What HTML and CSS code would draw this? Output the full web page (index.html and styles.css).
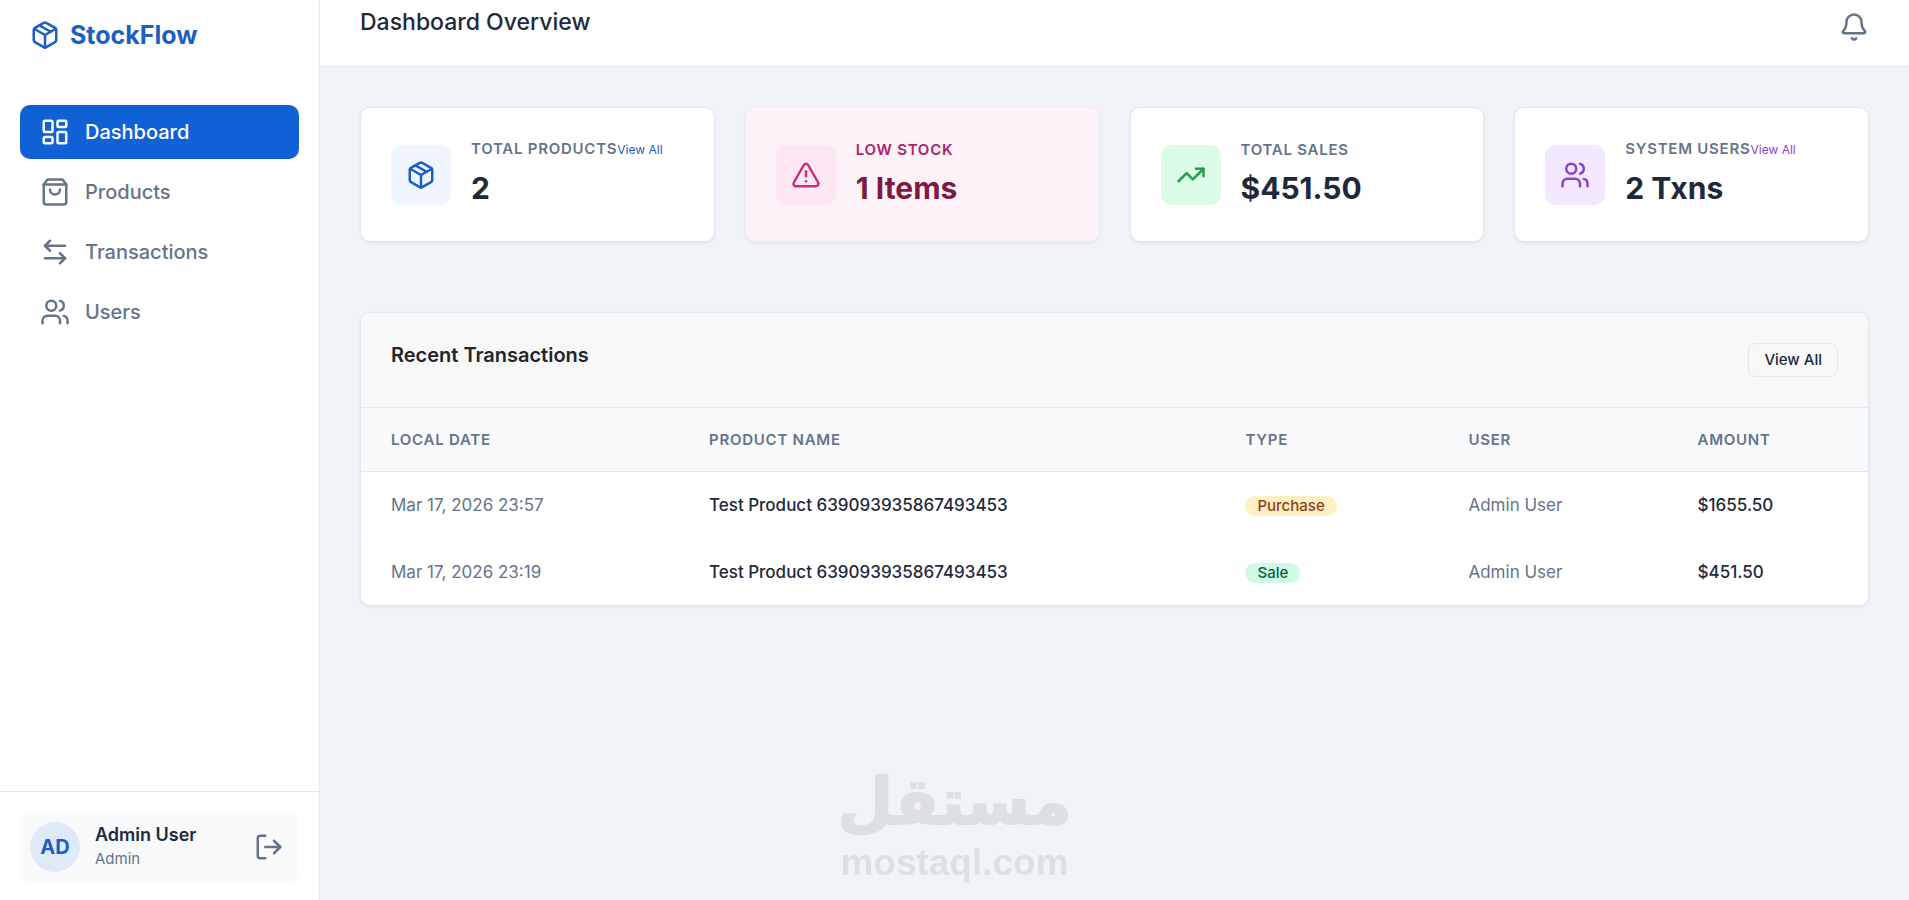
FILE: index.html
```html
<!DOCTYPE html>
<html lang="en">
<head>
    <meta charset="UTF-8">
    <meta name="viewport" content="width=device-width, initial-scale=1">
    <title>StockFlow</title>
    <link rel="stylesheet" href="styles.css">
</head>
<body>

<svg class="sprite" aria-hidden="true">
    <symbol id="icon-box" viewBox="0 0 24 24">
        <path d="M21 16V8a2 2 0 0 0-1-1.73l-7-4a2 2 0 0 0-2 0l-7 4A2 2 0 0 0 3 8v8a2 2 0 0 0 1 1.73l7 4a2 2 0 0 0 2 0l7-4A2 2 0 0 0 21 16z"/>
        <path d="M12 22V12"/>
        <path d="M3.3 7 12 12l8.7-5"/>
        <path d="m7.5 4.27 9 5.15"/>
    </symbol>
    <symbol id="icon-dashboard" viewBox="0 0 24 24">
        <rect x="3" y="3" width="7" height="9" rx="1"/>
        <rect x="14" y="3" width="7" height="5" rx="1"/>
        <rect x="14" y="12" width="7" height="9" rx="1"/>
        <rect x="3" y="16" width="7" height="5" rx="1"/>
    </symbol>
    <symbol id="icon-bag" viewBox="0 0 24 24">
        <path d="M6 2 3 6v14a2 2 0 0 0 2 2h14a2 2 0 0 0 2-2V6l-3-4Z"/>
        <path d="M3 6h18"/>
        <path d="M16 10a4 4 0 0 1-8 0"/>
    </symbol>
    <symbol id="icon-transfer" viewBox="0 0 24 24">
        <path d="M8 3 4 7l4 4"/>
        <path d="M4 7h16"/>
        <path d="m16 21 4-4-4-4"/>
        <path d="M20 17H4"/>
    </symbol>
    <symbol id="icon-users" viewBox="0 0 24 24">
        <path d="M16 21v-2a4 4 0 0 0-4-4H6a4 4 0 0 0-4 4v2"/>
        <circle cx="9" cy="7" r="4"/>
        <path d="M22 21v-2a4 4 0 0 0-3-3.87"/>
        <path d="M16 3.13a4 4 0 0 1 0 7.75"/>
    </symbol>
    <symbol id="icon-logout" viewBox="0 0 24 24">
        <path d="M9 21H5a2 2 0 0 1-2-2V5a2 2 0 0 1 2-2h4"/>
        <path d="m16 17 5-5-5-5"/>
        <path d="M21 12H9"/>
    </symbol>
    <symbol id="icon-bell" viewBox="0 0 24 24">
        <path d="M10.27 21a2 2 0 0 0 3.46 0"/>
        <path d="M3.26 15.33A1 1 0 0 0 4 17h16a1 1 0 0 0 .74-1.67C19.41 13.96 18 12.5 18 8A6 6 0 0 0 6 8c0 4.5-1.41 5.96-2.74 7.33"/>
    </symbol>
    <symbol id="icon-alert" viewBox="0 0 24 24">
        <path d="m21.73 18-8-14a2 2 0 0 0-3.48 0l-8 14A2 2 0 0 0 4 21h16a2 2 0 0 0 1.73-3"/>
        <path d="M12 9v4"/>
        <path d="M12 17h.01"/>
    </symbol>
    <symbol id="icon-trend" viewBox="0 0 24 24">
        <path d="m22 7-8.5 8.5-5-5L2 17"/>
        <path d="M16 7h6v6"/>
    </symbol>
</svg>

<div class="layout">
    <aside class="sidebar">
        <a class="brand" href="#">
            <svg class="icon"><use href="#icon-box"/></svg>
            <span>StockFlow</span>
        </a>

        <nav class="nav">
            <a class="nav-link active" href="#"><svg class="icon"><use href="#icon-dashboard"/></svg>Dashboard</a>
            <a class="nav-link" href="#"><svg class="icon"><use href="#icon-bag"/></svg>Products</a>
            <a class="nav-link" href="#"><svg class="icon"><use href="#icon-transfer"/></svg>Transactions</a>
            <a class="nav-link" href="#"><svg class="icon"><use href="#icon-users"/></svg>Users</a>
        </nav>

        <div class="sidebar-footer">
            <div class="profile">
                <div class="avatar">AD</div>
                <div class="profile-info">
                    <div class="profile-name">Admin User</div>
                    <div class="profile-role">Admin</div>
                </div>
                <button class="icon-button" type="button" aria-label="Log out">
                    <svg class="icon"><use href="#icon-logout"/></svg>
                </button>
            </div>
        </div>
    </aside>

    <div class="main">
        <header class="topbar">
            <h1>Dashboard Overview</h1>
            <button class="icon-button" type="button" aria-label="Notifications">
                <svg class="icon"><use href="#icon-bell"/></svg>
            </button>
        </header>

        <main class="content">
            <section class="stats">
                <div class="card stat">
                    <div class="stat-icon blue"><svg class="icon"><use href="#icon-box"/></svg></div>
                    <div>
                        <div class="stat-head"><span class="stat-label">Total Products</span><a class="stat-link" href="#">View All</a></div>
                        <div class="stat-value">2</div>
                    </div>
                </div>
                <div class="card stat stat-warning">
                    <div class="stat-icon pink"><svg class="icon"><use href="#icon-alert"/></svg></div>
                    <div>
                        <div class="stat-head"><span class="stat-label">Low Stock</span></div>
                        <div class="stat-value">1 Items</div>
                    </div>
                </div>
                <div class="card stat">
                    <div class="stat-icon green"><svg class="icon"><use href="#icon-trend"/></svg></div>
                    <div>
                        <div class="stat-head"><span class="stat-label">Total Sales</span></div>
                        <div class="stat-value">$451.50</div>
                    </div>
                </div>
                <div class="card stat">
                    <div class="stat-icon purple"><svg class="icon"><use href="#icon-users"/></svg></div>
                    <div>
                        <div class="stat-head"><span class="stat-label">System Users</span><a class="stat-link stat-link-purple" href="#">View All</a></div>
                        <div class="stat-value">2 Txns</div>
                    </div>
                </div>
            </section>

            <section class="card panel">
                <div class="panel-header">
                    <h2>Recent Transactions</h2>
                    <a class="btn" href="#">View All</a>
                </div>
                <table>
                    <thead>
                    <tr>
                        <th class="col-date">Local Date</th>
                        <th class="col-product">Product Name</th>
                        <th class="col-type">Type</th>
                        <th class="col-user">User</th>
                        <th>Amount</th>
                    </tr>
                    </thead>
                    <tbody>
                    <tr>
                        <td>Mar 17, 2026 23:57</td>
                        <td class="strong">Test Product 639093935867493453</td>
                        <td><span class="badge badge-purchase">Purchase</span></td>
                        <td>Admin User</td>
                        <td class="strong">$1655.50</td>
                    </tr>
                    <tr>
                        <td>Mar 17, 2026 23:19</td>
                        <td class="strong">Test Product 639093935867493453</td>
                        <td><span class="badge badge-sale">Sale</span></td>
                        <td>Admin User</td>
                        <td class="strong">$451.50</td>
                    </tr>
                    </tbody>
                </table>
            </section>
        </main>
    </div>
</div>

<div class="watermark">
    <div class="watermark-ar" lang="ar" dir="rtl">مستقل</div>
    <div class="watermark-en">mostaql.com</div>
</div>

</body>
</html>
```
FILE: styles.css
```css
* {
    box-sizing: border-box;
}

body {
    margin: 0;
    font-family: Inter, "Liberation Sans", sans-serif;
    font-size: 17px;
    color: #1e293b;
    background-color: #f0f4f9;
}

h1, h2 {
    margin: 0;
    font-weight: 600;
}

a {
    text-decoration: none;
}

.sprite {
    display: none;
}

.icon {
    display: block;
    width: 30px;
    height: 30px;
    flex-shrink: 0;
    fill: none;
    stroke: currentColor;
    stroke-width: 2;
    stroke-linecap: round;
    stroke-linejoin: round;
}

.icon-button {
    padding: 0;
    border: none;
    background: none;
    color: #64748b;
    cursor: pointer;
}

.layout {
    display: flex;
    min-height: 100vh;
}

/* Sidebar */

.sidebar {
    position: sticky;
    top: 0;
    display: flex;
    flex-direction: column;
    width: 320px;
    height: 100vh;
    flex-shrink: 0;
    background-color: #ffffff;
    border-right: 1px solid #e2e8f0;
}

.brand {
    display: flex;
    align-items: center;
    gap: 10px;
    padding: 20px 30px;
    font-size: 25px;
    line-height: 30px;
    font-weight: 700;
    color: #1b5fc1;
}

.nav {
    display: flex;
    flex-direction: column;
    gap: 6px;
    padding: 35px 20px;
    flex: 1;
}

.nav-link {
    display: flex;
    align-items: center;
    gap: 15px;
    height: 54px;
    padding: 0 20px;
    border-radius: 10px;
    font-size: 20px;
    font-weight: 500;
    color: #64748b;
}

.nav-link.active {
    background-color: #1161d6;
    color: #ffffff;
}

.sidebar-footer {
    padding: 20px 20px 18px;
    border-top: 1px solid #e2e8f0;
}

.profile {
    display: flex;
    align-items: center;
    gap: 15px;
    padding: 10px 15px 10px 10px;
    border-radius: 10px;
    background-color: #f8fafc;
}

.avatar {
    width: 50px;
    height: 50px;
    border-radius: 50%;
    background-color: #dfe9f8;
    color: #1b5fc1;
    font-size: 20px;
    line-height: 50px;
    font-weight: 700;
    text-align: center;
}

.profile-info {
    flex: 1;
    line-height: 24px;
}

.profile-name {
    font-size: 18px;
    font-weight: 600;
}

.profile-role {
    font-size: 15px;
    color: #64748b;
}

/* Top bar */

.topbar {
    display: flex;
    align-items: center;
    justify-content: space-between;
    padding: 8px 40px 20px;
    background-color: #ffffff;
    border-bottom: 1px solid #e2e8f0;
}

.topbar h1 {
    margin-bottom: 10px;
    font-size: 23px;
    line-height: 28px;
    font-weight: 500;
}

/* Content */

.main {
    flex: 1;
    min-width: 0;
}

.content {
    padding: 40px;
}

.card {
    background-color: #ffffff;
    border: 1px solid #e2e8f0;
    border-radius: 10px;
    box-shadow: 0 1px 3px rgba(0, 0, 0, 0.08);
}

.stats {
    display: grid;
    grid-template-columns: repeat(4, 1fr);
    gap: 30px;
    margin-bottom: 70px;
}

.stat {
    display: flex;
    align-items: center;
    gap: 20px;
    padding: 30px;
}

.stat-icon {
    display: flex;
    align-items: center;
    justify-content: center;
    width: 60px;
    height: 60px;
    border-radius: 10px;
}

.stat-icon.blue {
    background-color: #eff6ff;
    color: #1b5fc1;
}

.stat-icon.pink {
    background-color: #fce7f3;
    color: #c4307b;
}

.stat-icon.green {
    background-color: #dcfce7;
    color: #239f50;
}

.stat-icon.purple {
    background-color: #f3e8ff;
    color: #8b3fcb;
}

.stat-head {
    display: flex;
    align-items: baseline;
    margin-bottom: 5px;
    line-height: 22px;
}

.stat-label {
    font-size: 15px;
    font-weight: 600;
    letter-spacing: 0.05em;
    text-transform: uppercase;
    color: #64748b;
}

.stat-link {
    font-size: 12px;
    color: #1b5fc1;
}

.stat-link-purple {
    color: #8b3fcb;
}

.stat-value {
    font-size: 30px;
    line-height: 45px;
    font-weight: 700;
}

.stat-warning {
    background-color: #fdf2f8;
    border-color: #fce7f3;
}

.stat-warning .stat-label {
    color: #a8256a;
}

.stat-warning .stat-value {
    color: #7c1a44;
}

/* Transactions */

.panel {
    overflow: hidden;
}

.panel-header {
    display: flex;
    align-items: flex-start;
    justify-content: space-between;
    padding: 30px;
    background-color: #f8f8f8;
    border-bottom: 1px solid #e2e8f0;
}

.panel-header h2 {
    font-size: 20px;
    line-height: 24px;
    color: #212529;
}

.btn {
    padding: 5px 15px;
    border: 1px solid #e2e8f0;
    border-radius: 8px;
    font-size: 15px;
    line-height: 22px;
    font-weight: 500;
    color: #1e293b;
}

table {
    width: 100%;
    border-collapse: collapse;
}

th, td {
    padding: 20px 30px;
    text-align: left;
}

th {
    background-color: #f8fafc;
    border-bottom: 1px solid #e2e8f0;
    font-size: 15px;
    line-height: 23px;
    font-weight: 600;
    letter-spacing: 0.05em;
    text-transform: uppercase;
    color: #64748b;
}

td {
    line-height: 26px;
    color: #64748b;
}

tbody tr + tr td {
    border-top: 1px solid #f8fafc;
}

.strong {
    font-weight: 500;
    color: #1e293b;
}

.col-date {
    width: 21.1%;
}

.col-product {
    width: 35.6%;
}

.col-type {
    width: 14.8%;
}

.col-user {
    width: 15.2%;
}

.badge {
    display: inline-block;
    padding: 0 12px;
    border-radius: 10px;
    font-size: 15px;
    line-height: 20px;
    font-weight: 500;
}

.badge-purchase {
    background-color: #fef0c4;
    color: #92400e;
}

.badge-sale {
    background-color: #d1fae5;
    color: #065f46;
}

/* Watermark */

.watermark {
    position: fixed;
    right: 0;
    bottom: 14px;
    left: 0;
    color: #dddfe3;
    font-weight: 700;
    text-align: center;
    pointer-events: none;
}

.watermark-ar {
    font-family: "DejaVu Sans", sans-serif;
    font-size: 64px;
    line-height: 76px;
    -webkit-text-stroke: 2px #dddfe3;
}

.watermark-en {
    font-family: "Liberation Sans", sans-serif;
    font-size: 37px;
    line-height: 46px;
}
```
